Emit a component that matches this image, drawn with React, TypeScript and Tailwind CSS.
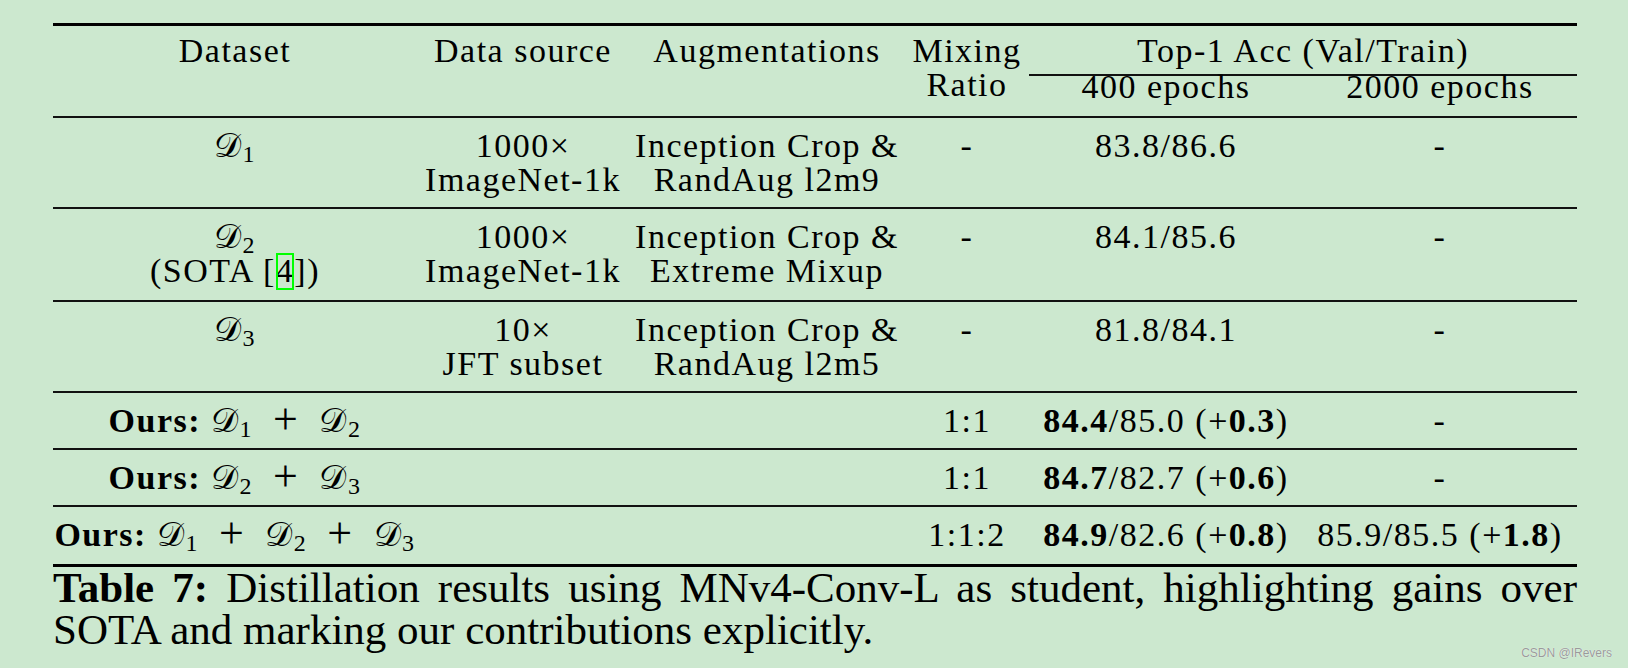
const D = ({ n }: { n: number }) => (
  <span className="whitespace-nowrap">
    <span className="font-['DejaVu_Serif','DejaVu_Sans',serif] leading-[0]">𝒟</span>
    <span className="text-[24px] leading-[0] align-[-5px]">{n}</span>
  </span>
);

const Plus = () => <span className="mx-[20px] text-[44px] leading-[0] align-[-2px]">+</span>;

const Rule = ({ thick }: { thick?: boolean }) => (
  <div className={thick ? "h-[3px] bg-black" : "h-[2px] bg-[#111]"} />
);

const cols = "grid grid-cols-[364px_212px_276px_124px_274px_274px] text-center";

type Row = {
  name: React.ReactNode;
  source?: React.ReactNode;
  aug?: React.ReactNode;
  ratio: string;
  acc400: React.ReactNode;
  acc2000: React.ReactNode;
  pb?: string;
};

const rows: Row[] = [
  {
    name: <D n={1} />,
    source: (
      <>
        1000×
        <br />
        ImageNet-1k
      </>
    ),
    aug: (
      <>
        Inception Crop &amp;
        <br />
        RandAug l2m9
      </>
    ),
    ratio: "-",
    acc400: "83.8/86.6",
    acc2000: "-",
  },
  {
    name: (
      <>
        <D n={2} />
        <br />
        (SOTA [
        <span className="relative">
          4
          <span className="absolute top-[1px] -bottom-[1px] left-0 right-0 border-2 border-[#00ff00]" />
        </span>
        ])
      </>
    ),
    source: (
      <>
        1000×
        <br />
        ImageNet-1k
      </>
    ),
    aug: (
      <>
        Inception Crop &amp;
        <br />
        Extreme Mixup
      </>
    ),
    ratio: "-",
    acc400: "84.1/85.6",
    acc2000: "-",
    pb: "pb-[12px]",
  },
  {
    name: <D n={3} />,
    source: (
      <>
        10×
        <br />
        JFT subset
      </>
    ),
    aug: (
      <>
        Inception Crop &amp;
        <br />
        RandAug l2m5
      </>
    ),
    ratio: "-",
    acc400: "81.8/84.1",
    acc2000: "-",
  },
];

const Gain = ({ a, b, g }: { a: string; b: string; g: string }) => (
  <>
    <b>{a}</b>/{b} (+<b>{g}</b>)
  </>
);

const ours: Row[] = [
  {
    name: (
      <>
        <b>Ours:</b> <D n={1} />
        <Plus />
        <D n={2} />
      </>
    ),
    ratio: "1:1",
    acc400: <Gain a="84.4" b="85.0" g="0.3" />,
    acc2000: "-",
  },
  {
    name: (
      <>
        <b>Ours:</b> <D n={2} />
        <Plus />
        <D n={3} />
      </>
    ),
    ratio: "1:1",
    acc400: <Gain a="84.7" b="82.7" g="0.6" />,
    acc2000: "-",
  },
  {
    name: (
      <>
        <b>Ours:</b> <D n={1} />
        <Plus />
        <D n={2} />
        <Plus />
        <D n={3} />
      </>
    ),
    ratio: "1:1:2",
    acc400: <Gain a="84.9" b="82.6" g="0.8" />,
    acc2000: (
      <>
        85.9/85.5 (+<b>1.8</b>)
      </>
    ),
    pb: "pb-[12px]",
  },
];

const BodyRow = ({ r }: { r: Row }) => (
  <div className={`${cols} pt-[11px] ${r.pb ?? "pb-[10px]"}`}>
    <div className="whitespace-nowrap">{r.name}</div>
    <div className="whitespace-nowrap">{r.source}</div>
    <div className="whitespace-nowrap">{r.aug}</div>
    <div>{r.ratio}</div>
    <div className="whitespace-nowrap">{r.acc400}</div>
    <div className="whitespace-nowrap">{r.acc2000}</div>
  </div>
);

export default function App() {
  return (
    <div className="relative w-[1628px] h-[668px] overflow-hidden bg-[#cce8cf] text-black font-['Liberation_Serif',serif]">
      <div className="ml-[53px] w-[1524px] pt-[23px]">
        <div className="text-[34px] leading-[34px] tracking-[1.5px]">
          <Rule thick />
          <div className={`${cols} pt-[8px] pb-[12px]`}>
            <div>Dataset</div>
            <div className="whitespace-nowrap">Data source</div>
            <div>Augmentations</div>
            <div>
              Mixing
              <br />
              Ratio
            </div>
            <div className="col-span-2 flex flex-col">
              <div>Top-1 Acc (Val/Train)</div>
              <div className="mt-[6px] h-[1.5px] bg-[#111]" />
              <div className="-mt-[6px] grid grid-cols-2">
                <div>400 epochs</div>
                <div>2000 epochs</div>
              </div>
            </div>
          </div>
          <Rule />
          {rows.map((r, i) => (
            <div key={i}>
              <BodyRow r={r} />
              <Rule />
            </div>
          ))}
          {ours.map((r, i) => (
            <div key={i}>
              <BodyRow r={r} />
              <Rule thick={i === ours.length - 1} />
            </div>
          ))}
        </div>
        <p className="text-[43px] leading-[42px] text-justify">
          <b>Table 7:</b> Distillation results using MNv4-Conv-L as student, highlighting gains over SOTA and
          marking our contributions explicitly.
        </p>
      </div>
      <div className="absolute right-[16px] bottom-[8px] font-['Liberation_Sans',sans-serif] text-[12px] leading-[14px] text-[#9a9a9a] [text-shadow:0_0_1px_#fff]">
        CSDN @IRevers
      </div>
    </div>
  );
}
